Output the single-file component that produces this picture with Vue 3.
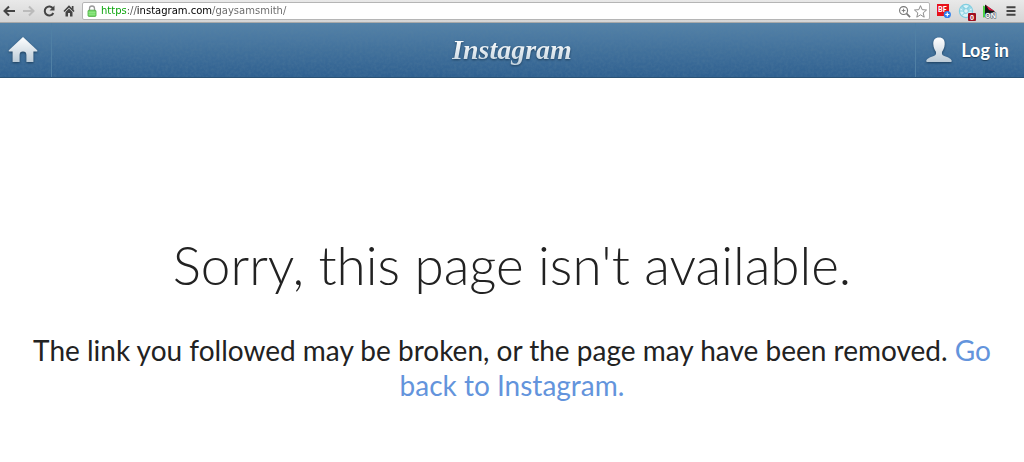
<script setup>
import { ref } from 'vue'
const address = ref('https://instagram.com/gaysamsmith/')
</script>

<template>
  <div class="browser">
    <div class="toolbar">
      <button class="tool" aria-label="Back">
        <svg viewBox="0 0 14 14"><path d="M13 7H3M7 2.5 2.5 7 7 11.5" fill="none" stroke="#444" stroke-width="2" /></svg>
      </button>
      <button class="tool" aria-label="Forward">
        <svg viewBox="0 0 14 14"><path d="M1 7h10M7 2.5 11.500 7 7 11.5" fill="none" stroke="#bbb" stroke-width="2" /></svg>
      </button>
      <button class="tool" aria-label="Reload">
        <svg viewBox="0 0 14 14"><path d="M11 4.500A4.500 4.500 0 1 0 11.300 9" fill="none" stroke="#444" stroke-width="2" /><path d="M12.500 1.500v5h-5z" fill="#444" /></svg>
      </button>
      <button class="tool" aria-label="Home page">
        <svg viewBox="0 0 14 14"><path d="M2 7.500 7 2.500l5 5" fill="none" stroke="#444" stroke-width="1.600" /><path d="M9.800 2H11.500v4L9.800 4.500zM3.500 8 7 4.500 10.500 8v4.500H8V9H6v3.500H3.500z" fill="#444" /></svg>
      </button>
      <div class="omnibox">
        <svg class="lock" viewBox="0 0 10 12">
          <path d="M2.500 6V3.500a2.500 2.500 0 0 1 5 0V6" fill="none" stroke="#999" stroke-width="1.300" />
          <rect x="1" y="5.200" width="8" height="6.200" rx="1" fill="#77dc6b" stroke="#48a83c" stroke-width=".8" />
          <path d="M1.500 7.500h7M1.500 9.300h7" stroke="#a5f09a" stroke-width=".5" />
        </svg>
        <input v-model="address" class="address" type="text" aria-label="Address" spellcheck="false" />
        <button class="mini" aria-label="Zoom">
          <svg viewBox="0 0 14 14" fill="none" stroke="#777"><circle cx="6" cy="6" r="4.300" stroke-width="1.200" /><path d="M9.300 9.300 13 13" stroke-width="1.800" /><path d="M4 6h4M6 4v4" /></svg>
        </button>
        <button class="mini" aria-label="Bookmark">
          <svg viewBox="0 0 14 14"><path d="m7 .7 1.800 4.300 4.700.4-3.600 3.100 1.100 4.600L7 10.600l-4 2.500 1.100-4.600L.5 5.400l4.700-.4z" fill="#fff" stroke="#858585" stroke-linejoin="round" /></svg>
        </button>
      </div>
      <button class="ext" aria-label="BF extension">
        <svg viewBox="0 0 18 20"><rect x="2" y="3" width="12" height="12" fill="#e8101a" /><text x="3" y="11" class="bf">BF</text><circle cx="12.300" cy="13.500" r="3.600" fill="#2f80ef" /><path d="M10.300 13.500h4M12.300 11.500v4" stroke="#fff" stroke-width="1.200" /></svg>
      </button>
      <button class="ext" aria-label="Blocker extension">
        <svg viewBox="0 0 18 20">
          <g fill="none" stroke="#7fcde0"><circle cx="8" cy="10" r="6.600" fill="#d9f2f7" stroke-width="1.200" /><circle cx="8" cy="10" r="2.400" /><path d="M4.500 5.500 6.500 8M11.500 5.500 9.500 8M2 10h3.500M10.500 10H14M4 14.500 6.500 12" /><circle cx="5" cy="7" r="1.300" /><circle cx="11" cy="7" r="1.300" /></g>
          <rect x="10" y="12" width="8" height="8" rx="1" fill="#9f1020" /><text x="12" y="18.500" class="count">0</text>
        </svg>
      </button>
      <button class="ext" aria-label="Player extension">
        <svg viewBox="0 0 18 20"><path d="M2 4.500 5 6v10l-3 .5z" fill="#4bd342" /><path d="M4 3.500 14 10.500 4 15z" fill="#151515" /><path d="m5 4.200 8.500 6L8 9z" fill="#e81942" /><text x="4" y="17" class="on">ON</text></svg>
      </button>
      <button class="menu" aria-label="Menu">
        <svg viewBox="0 0 10 10"><path d="M.5 1.200h9M.5 5h9M.5 8.800h9" stroke="#444" stroke-width="2" /></svg>
      </button>
    </div>

    <header class="site">
      <svg class="grain" aria-hidden="true">
        <filter id="grain"><feTurbulence type="fractalNoise" baseFrequency=".35" numOctaves="2" seed="4" /><feColorMatrix values="0 0 0 0 .1  0 0 0 0 .22  0 0 0 0 .34  .5 0 0 0 -.17" /></filter>
        <rect width="100%" height="100%" filter="url(#grain)" />
      </svg>
      <a class="home" href="#" aria-label="Home">
        <svg viewBox="0 0 30 28">
          <defs><linearGradient id="silver" x1="0" y1="0" x2="0" y2="1"><stop stop-color="#fff" /><stop offset="1" stop-color="#bccbd7" /></linearGradient></defs>
          <path d="M15 1 .8 14.200q-.7 1.300.8 1.300h3V26h7v-7a3.400 3.400 0 0 1 6.800 0v7h7V15.500h3q1.500 0 .8-1.300z" fill="url(#silver)" />
        </svg>
      </a>
      <a class="brand" href="#">Instagram</a>
      <a class="login" href="#">
        <svg viewBox="0 0 26 26"><path d="M13 .5c4 0 6 2.600 5.700 6.800-.2 3.600-1.400 5.600-2.500 7.200-.7 2.300-.2 3.500 2 4.400 4 1.500 7.300 2.600 7.600 5.100q0 1-1 1H1.200q-1 0-1-1c.3-2.500 3.600-3.600 7.600-5.100 2.200-.9 2.700-2.100 2-4.400-1.100-1.600-2.300-3.600-2.500-7.200C7 3.100 9 .5 13 .5z" fill="url(#silver)" /></svg>
        <span>Log in</span>
      </a>
    </header>

    <main class="message">
      <h1>Sorry, this page isn't available.</h1>
      <p>The link you followed may be broken, or the page may have been removed. <a href="#">Go back to Instagram.</a></p>
    </main>
  </div>
</template>

<style>
body {
  margin: 0;
  background: #fff;
}
</style>

<style scoped>
.browser {
  font-family: Lato, "Open Sans", sans-serif;
  color: #222;
}
button {
  border: 0;
  padding: 0;
  background: none;
  display: flex;
  flex: none;
}
svg {
  display: block;
}
.toolbar {
  display: flex;
  align-items: center;
  height: 22px;
  padding: 0 8px 0 2px;
  background: linear-gradient(#e9e9e9, #d5d5d5);
  border-bottom: 1px solid #a9a9a9;
}
.tool {
  width: 14px;
  margin-right: 6px;
}
.tool svg {
  width: 14px;
  height: 14px;
}
.omnibox {
  display: flex;
  flex: 1;
  min-width: 0;
  align-items: center;
  gap: 3px;
  height: 18px;
  box-sizing: border-box;
  padding: 0 2px 0 4px;
  background: #fff;
  border: 1px solid #b5b5b5;
  border-radius: 2px;
}
.lock {
  width: 10px;
  height: 12px;
  flex: none;
}
.address {
  flex: 1;
  min-width: 0;
  border: 0;
  padding: 0;
  outline: 0;
  margin-left: 1px;
  font: 10px/16px "DejaVu Sans", "Noto Sans", sans-serif;
  color: transparent;
  background: linear-gradient(90deg, #00a000 26px, #555 26px, #555 36px, #000 36px, #000 111px, #666 111px);
  background-clip: text;
  -webkit-background-clip: text;
}
.mini svg {
  width: 13px;
  height: 13px;
}
.ext {
  margin-left: 5px;
}
.ext svg {
  width: 18px;
  height: 20px;
}
.bf {
  font: 900 7px Lato, sans-serif;
  fill: #fff;
}
.count {
  font: 700 7px "Open Sans", sans-serif;
  fill: #fff;
}
.on {
  font: 700 7px "Open Sans", sans-serif;
  fill: #fff;
  stroke: #456;
  stroke-width: 1px;
  paint-order: stroke;
}
.menu {
  margin-left: 7px;
}
.menu svg {
  width: 10px;
  height: 10px;
}
.site {
  position: relative;
  display: grid;
  grid-template-columns: 1fr auto 1fr;
  height: 55px;
  box-sizing: border-box;
  background: linear-gradient(#5482a8, #2f6090);
  border-bottom: 1px solid #2a5275;
}
.grain {
  position: absolute;
  inset: 0;
  width: 100%;
  height: 100%;
}
.home,
.brand,
.login {
  position: relative;
  display: flex;
  align-items: center;
  color: #fff;
  text-decoration: none;
}
.home {
  width: 52px;
  box-sizing: border-box;
  justify-content: center;
  padding-right: 5px;
  border-right: 1px solid #5080a5;
}
.home svg {
  width: 30px;
  height: 28px;
  filter: drop-shadow(0 1px 1px #1c3e5c);
}
.brand {
  font: italic 700 28px/54px "Liberation Serif", serif;
  background: linear-gradient(#fff 16px, #c6d5e0 40px);
  background-clip: text;
  -webkit-background-clip: text;
  color: transparent;
  filter: drop-shadow(0 1px 1px #1c3e5c);
}
.login {
  justify-self: end;
  gap: 9px;
  padding: 0 15px 0 10px;
  border-left: 1px solid #5080a5;
  font: 700 18px/24px Lato, "Open Sans", sans-serif;
  text-shadow: 0 1px 1px #1c3e5c;
}
.login svg {
  width: 26px;
  height: 26px;
  filter: drop-shadow(0 1px 1px #1c3e5c);
}
.message {
  padding: 157px 24px 60px;
  text-align: center;
}
h1 {
  margin: 0;
  font-size: 53px;
  line-height: 60px;
  font-weight: 300;
}
p {
  margin: 38px 0 0;
  font-size: 28px;
  line-height: 35px;
}
p a {
  color: #6394dc;
  text-decoration: none;
}
</style>
